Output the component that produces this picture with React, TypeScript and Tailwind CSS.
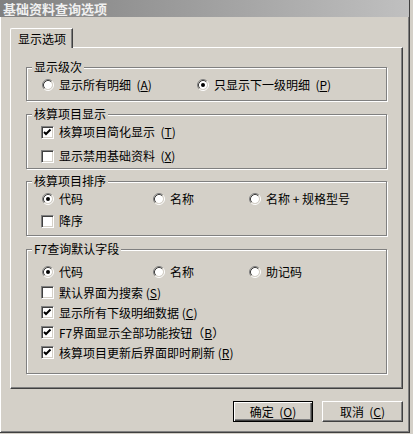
import React from "react";

// Classic Win2000-style "基础资料查询选项" options dialog.

const FONT = { fontFamily: '"Noto Sans CJK SC", "Noto Sans", sans-serif' };

function Radio({ checked }: { checked?: boolean }) {
  return (
    <svg width="12" height="12" viewBox="0 0 12 12" className="shrink-0">
      <circle cx="6" cy="6" r="4" fill="#fff" />
      <path d="M2.11 9.89 A5.5 5.5 0 0 1 9.89 2.11" fill="none" stroke="#808080" />
      <path d="M9.89 2.11 A5.5 5.5 0 0 1 2.11 9.89" fill="none" stroke="#fff" />
      <path d="M2.82 9.18 A4.5 4.5 0 0 1 9.18 2.82" fill="none" stroke="#404040" />
      <path d="M9.18 2.82 A4.5 4.5 0 0 1 2.82 9.18" fill="none" stroke="#d4d0c8" />
      {checked && <circle cx="6" cy="6" r="2" fill="#000" />}
    </svg>
  );
}

function Check({ checked }: { checked?: boolean }) {
  return (
    <div className="w-[13px] h-[13px] shrink-0 bg-white border border-t-[#808080] border-l-[#808080] border-r-white border-b-white shadow-[inset_1px_1px_0_#404040,inset_-1px_-1px_0_#d4d0c8] flex items-center justify-center">
      {checked && (
        <svg width="9" height="9" viewBox="0 0 9 9">
          <path d="M1 4 L3 6 L7.5 1.5" fill="none" stroke="#000" strokeWidth="2" />
        </svg>
      )}
    </div>
  );
}

function Option({
  kind,
  checked,
  children,
}: {
  kind: "radio" | "check";
  checked?: boolean;
  children: React.ReactNode;
}) {
  return (
    <div className="flex items-center gap-[5px] h-[16px] whitespace-nowrap">
      {kind === "radio" ? <Radio checked={checked} /> : <Check checked={checked} />}
      <span className="text-[12px] leading-none text-black">{children}</span>
    </div>
  );
}

function Group({
  title,
  className,
  children,
}: {
  title: string;
  className: string;
  children: React.ReactNode;
}) {
  return (
    <div
      className={
        "relative border border-[#808080] shadow-[inset_1px_1px_0_#fff,1px_1px_0_#fff] " +
        className
      }
    >
      <span className="absolute left-[5px] top-[-8px] bg-[#d4d0c8] px-[2px] text-[12px] leading-[14px] text-black whitespace-nowrap">
        {title}
      </span>
      {children}
    </div>
  );
}

function Button({ def, children }: { def?: boolean; children: React.ReactNode }) {
  return (
    <div
      className={
        "h-[21px] flex items-center justify-center text-[12px] leading-none text-black " +
        (def
          ? "w-[80px] border border-black shadow-[inset_1px_1px_0_#fff,inset_-1px_-1px_0_#404040,inset_-2px_-2px_0_#808080]"
          : "w-[81px] border border-t-white border-l-white border-r-[#404040] border-b-[#404040] shadow-[inset_-1px_-1px_0_#808080]")
      }
    >
      {children}
    </div>
  );
}

export default function App() {
  return (
    <div
      className="w-[413px] h-[434px] bg-[#d4d0c8] flex flex-col overflow-hidden"
      style={FONT}
    >
      <div className="w-[410px] h-[433px] flex flex-col border-r border-b border-[#404040] shadow-[inset_1px_0_0_#fff,inset_-1px_-1px_0_#808080]">
        {/* title bar */}
        <div className="h-[17px] w-[409px] bg-gradient-to-r from-[#808080] to-[#c0c0c0] flex items-center pl-[3px]">
          <span className="text-[13px] font-bold leading-none text-[#f0f0f0]">基础资料查询选项</span>
        </div>

        <div className="flex flex-col pl-[10px] pt-[11px]">
          {/* tab header */}
          <div className="flex">
            <div className="w-[63px] h-[20px] border-t border-l border-white border-r border-r-[#404040] shadow-[inset_-1px_0_0_#808080] rounded-tl-[2px] flex items-center pl-[7px] -mb-[1px] bg-[#d4d0c8] relative">
              <span className="text-[12px] leading-none text-black">显示选项</span>
            </div>
          </div>

          {/* tab panel */}
          <div className="w-[393px] h-[342px] border-t border-l border-white border-r border-b border-r-[#404040] border-b-[#404040] shadow-[inset_-1px_-1px_0_#808080] flex flex-col px-[15px] pt-[19px]">
            <Group title="显示级次" className="h-[34px] shrink-0">
              <div className="grid grid-cols-[155px_1fr] pl-[15px] pt-[9px]">
                <Option kind="radio">
                  显示所有明细&nbsp;&nbsp;(<u>A</u>)
                </Option>
                <Option kind="radio" checked>
                  只显示下一级明细&nbsp;&nbsp;(<u>P</u>)
                </Option>
              </div>
            </Group>

            <Group title="核算项目显示" className="h-[55px] shrink-0 mt-[13px]">
              <div className="flex flex-col gap-[8px] pl-[14px] pt-[9px]">
                <Option kind="check" checked>
                  核算项目简化显示&nbsp;&nbsp;(<u>T</u>)
                </Option>
                <Option kind="check">
                  显示禁用基础资料&nbsp;&nbsp;(<u>X</u>)
                </Option>
              </div>
            </Group>

            <Group title="核算项目排序" className="h-[55px] shrink-0 mt-[12px]">
              <div className="flex flex-col gap-[6px] pl-[15px] pt-[9px]">
                <div className="grid grid-cols-[111px_96px_1fr]">
                  <Option kind="radio" checked>代码</Option>
                  <Option kind="radio">名称</Option>
                  <Option kind="radio">名称 + 规格型号</Option>
                </div>
                <div className="-ml-[1px]">
                  <Option kind="check">降序</Option>
                </div>
              </div>
            </Group>

            <Group title="F7查询默认字段" className="h-[125px] shrink-0 mt-[13px]">
              <div className="flex flex-col gap-[4.5px] pl-[15px] pt-[14px]">
                <div className="grid grid-cols-[111px_96px_1fr]">
                  <Option kind="radio" checked>代码</Option>
                  <Option kind="radio">名称</Option>
                  <Option kind="radio">助记码</Option>
                </div>
                <div className="-ml-[1px] flex flex-col gap-[4px]">
                  <Option kind="check">
                    默认界面为搜索 (<u>S</u>)
                  </Option>
                  <Option kind="check" checked>
                    显示所有下级明细数据 (<u>C</u>)
                  </Option>
                  <Option kind="check" checked>
                    F7界面显示全部功能按钮（<u>B</u>）
                  </Option>
                  <Option kind="check" checked>
                    核算项目更新后界面即时刷新 (<u>R</u>)
                  </Option>
                </div>
              </div>
            </Group>
          </div>

          {/* buttons */}
          <div className="flex justify-end gap-[9px] w-[393px] mt-[12px]">
            <Button def>
              确定&nbsp;&nbsp;(<u>O</u>)
            </Button>
            <Button>
              取消&nbsp;&nbsp;(<u>C</u>)
            </Button>
          </div>
        </div>
      </div>
    </div>
  );
}
